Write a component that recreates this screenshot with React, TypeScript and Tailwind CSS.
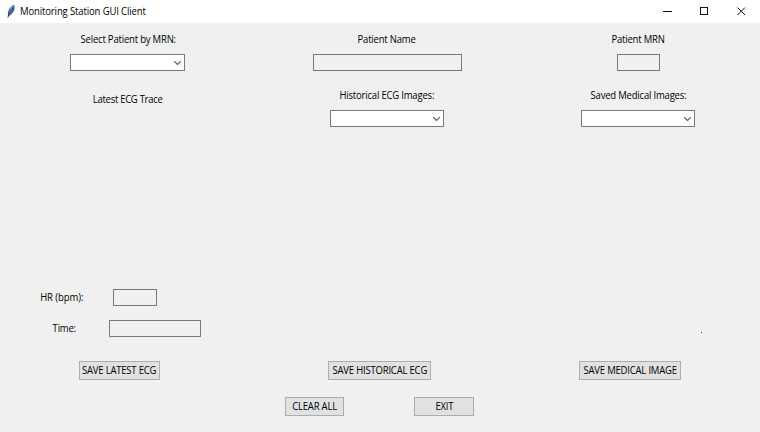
import React from "react";

function Label({ className = "", children }: { className?: string; children: React.ReactNode }) {
  return (
    <div className={`h-4 whitespace-nowrap leading-4 ${className}`}>
      <span className="inline-block origin-center scale-x-95">{children}</span>
    </div>
  );
}

function Entry({ className = "" }: { className?: string }) {
  return <div className={`h-[17px] border border-[#7a7a7a] bg-[#f0f0f0] ${className}`} />;
}

function Combo({ className = "w-[115px]" }: { className?: string }) {
  return (
    <div className={`flex h-[17px] items-center justify-end border border-[#7a7a7a] bg-white pr-[2px] ${className}`}>
      <svg width="9" height="7" viewBox="0 0 9 7" fill="none" stroke="#555" strokeWidth="1.1">
        <path d="M1.2 2.2 L4.5 5.4 L7.8 2.2" />
      </svg>
    </div>
  );
}

function Button({ className = "", children }: { className?: string; children: React.ReactNode }) {
  return (
    <button className={`flex h-[19px] items-center justify-center whitespace-nowrap border border-[#adadad] bg-[#e1e1e1] pb-px leading-4 ${className}`}>
      <span className="inline-block scale-x-95">{children}</span>
    </button>
  );
}

function TitleBar() {
  return (
    <header className="flex h-[23px] items-center bg-white">
      <svg className="ml-[6px]" width="11" height="15" viewBox="0 0 11 15">
        <path d="M2.2 12.5 C1.2 8.5 2.4 3.5 8 0.8 C9.6 3.5 8.2 9 3.8 11.4 Z" fill="#3f628c" />
        <path d="M3 9.5 C2.8 6 4.5 3 7.6 1.3 C7 4.5 5.4 7 3.6 10 Z" fill="#78a4d2" />
        <path d="M1.9 13.8 C2.6 10.5 4.3 7 6.8 3.5" fill="none" stroke="#24303f" strokeWidth="0.8" />
      </svg>
      <span className="ml-[2.5px] inline-block origin-left scale-x-95 tracking-[-0.13px]">Monitoring Station GUI Client</span>
      <div className="ml-auto flex">
        <svg width="111" height="21" viewBox="0 0 111 21" fill="none" stroke="#111" strokeWidth="1">
          <path d="M14 10.5 H23" />
          <rect x="51.5" y="6.5" width="7" height="7" />
          <path d="M88.5 6.5 L96 14 M96 6.5 L88.5 14" />
        </svg>
      </div>
    </header>
  );
}

export default function App() {
  return (
    <div className="flex h-[432px] w-[760px] flex-col overflow-hidden bg-[#f0f0f0] font-['Open_Sans','Noto_Sans',sans-serif] text-[10px] tracking-[-0.2px] text-black">
      <TitleBar />
      <main className="flex flex-col pt-2">
        <section className="grid grid-cols-[255px_265px_236px]">
          <div className="flex flex-col items-center">
            <Label className="ml-px">Select Patient by MRN:</Label>
            <div className="mt-[7px]"><Combo /></div>
            <Label className="mt-5 tracking-[-0.3px]">Latest ECG Trace</Label>
          </div>
          <div className="flex flex-col items-center">
            <Label className="mr-px">Patient Name</Label>
            <Entry className="mt-[7px] w-[149px]" />
            <Label className="mt-4 mr-px">Historical ECG Images:</Label>
            <div className="mt-[7px] mr-px"><Combo className="w-[114px]" /></div>
          </div>
          <div className="flex flex-col items-center">
            <Label>Patient MRN</Label>
            <Entry className="mt-[7px] ml-px w-[43px]" />
            <Label className="mt-4">Saved Medical Images:</Label>
            <div className="mt-[7px]"><Combo className="w-[114px]" /></div>
          </div>
        </section>
        <section className="mt-[162px] flex h-[72px] justify-between">
          <div>
            <div className="flex">
              <Label className="ml-[39px] w-[74px] tracking-[-0.05px]">HR (bpm):</Label>
              <Entry className="w-11" />
            </div>
            <div className="mt-[14px] flex">
              <Label className="ml-[52px] w-[57px]">Time:</Label>
              <Entry className="w-[92px]" />
            </div>
          </div>
          <div className="mr-[58px] mt-[43px] h-px w-px bg-[#444]" />
        </section>
        <section className="grid grid-cols-[239px_281px_240px]">
          <Button className="ml-[79px] w-[81px]">SAVE LATEST ECG</Button>
          <Button className="ml-[89px] w-[103px]">SAVE HISTORICAL ECG</Button>
          <Button className="ml-[59px] w-[102px]">SAVE MEDICAL IMAGE</Button>
        </section>
        <section className="ml-[285px] mt-[17px] flex gap-[70px]">
          <Button className="w-[59px]">CLEAR ALL</Button>
          <Button className="w-[60px]">EXIT</Button>
        </section>
      </main>
    </div>
  );
}
